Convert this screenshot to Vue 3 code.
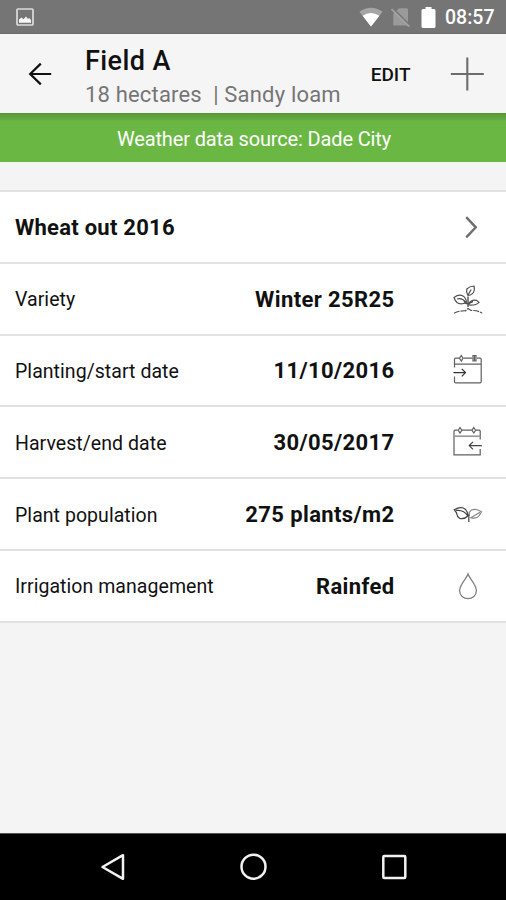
<script setup>
const rows = [
  { label: 'Variety', value: 'Winter 25R25', icon: 'variety' },
  { label: 'Planting/start date', value: '11/10/2016', icon: 'start' },
  { label: 'Harvest/end date', value: '30/05/2017', icon: 'end' },
  { label: 'Plant population', value: '275 plants/m2', icon: 'plant' },
  { label: 'Irrigation management', value: 'Rainfed', icon: 'drop' },
]
</script>

<template>
  <div class="screen">
    <div class="status">
      <svg class="picture" width="18" height="18" viewBox="0 0 18 18">
        <rect x="1" y="1" width="16" height="16" rx="1" fill="none" stroke="#dcdcdc" stroke-width="1.7" />
        <path d="M3 14.8V11.5L5.5 9.5L7.5 11.3L10 8.5L12 11L13.2 10L15 12V14.8Z" fill="#f6f6f6" />
      </svg>
      <svg class="wifi" width="24" height="20" viewBox="0 0 24 20">
        <path d="M12 19.5L.4 4.8Q12-3.2 23.6 4.8Z" fill="#a5a5a5" />
        <path d="M12 19.5L3.6 8.7Q12 3.2 20.4 8.7Z" fill="#fff" />
      </svg>
      <svg class="sim" width="20" height="20" viewBox="0 0 20 20">
        <path d="M8 1.2H15.5Q17 1.2 17 2.7V18.5H3.5Q2.3 18.5 2.3 17.3V6.7Z" fill="#9a9a9a" />
        <path d="M1.7 1.3L19.5 19.2" stroke="#777" stroke-width="2" />
        <path d="M.5 2L18.2 19.7" stroke="#a3a3a3" stroke-width="1.7" />
      </svg>
      <svg class="battery" width="15" height="21" viewBox="0 0 15 21">
        <path d="M4.5 0H10.5V2H13Q14.5 2 14.5 3.5V19.5Q14.5 21 13 21H2Q.5 21 .5 19.5V3.5Q.5 2 2 2H4.5Z" fill="#fff" />
      </svg>
      <span class="clock">08:57</span>
    </div>

    <header class="bar">
      <svg class="back" width="24" height="24" viewBox="0 0 24 24" fill="none" stroke="#111" stroke-width="2.2">
        <path d="M23.2 12H2.2M12.8 1.6L2.2 12L12.8 22.4" />
      </svg>
      <div class="heading">
        <div class="title">Field A</div>
        <div class="subtitle">18 hectares&nbsp; | Sandy loam</div>
      </div>
      <span class="edit">EDIT</span>
      <svg class="plus" width="34" height="34" viewBox="0 0 34 34" stroke="#6c6c6c" stroke-width="2.1">
        <path d="M.8 17H33.8M17.3 .5V33.5" />
      </svg>
    </header>

    <div class="source"><span>Weather data source: Dade City</span></div>

    <main class="list">
      <div class="row">
        <span class="crop">Wheat out 2016</span>
        <svg class="chevron" width="34" height="34" viewBox="0 0 34 34" fill="none" stroke="#6f6f6f" stroke-width="2.4">
          <path d="M15.2 6.2L24.8 16.3L15.2 26.4" />
        </svg>
      </div>
      <div v-for="row in rows" :key="row.label" class="row">
        <span class="label">{{ row.label }}</span>
        <span class="value">{{ row.value }}</span>
        <svg class="icon" width="34" height="34" viewBox="0 0 34 34" fill="none" stroke="#606060" stroke-width="1.2">
          <g v-if="row.icon === 'variety'" stroke="#505050">
            <path d="M17 24V13.5M17 21Q14.5 21 13 18.3M17 21.5Q18.5 19.5 22 18.5" stroke-width="1.4" />
            <path d="M3 14.5Q8 10.8 12 13Q15.3 15 15.5 19.8Q9 22 6 19.5Q4 17.5 3 14.5ZM6 16Q11 14.5 14.5 19" />
            <path d="M17 12.5Q14.8 9 15.8 6Q18.5 3.2 23 3Q24.3 8 21.5 10.6Q19.4 12.5 17 12.5ZM17 12L20.2 6.5" />
            <path d="M18 20.5Q20 16.5 25.5 17.3L28 19.3Q25 22.6 18 22Z" />
            <path d="M3 30.3Q8 27.5 14.5 27.8L17 25.5L20 27.5Q27 27.2 31 30.3" stroke-dasharray="6 1" />
          </g>
          <g v-else-if="row.icon === 'start'">
            <path d="M3.5 13.5V5.2Q3.5 4.2 4.5 4.2H8M12.5 4.2H21.5M26 4.2H29.2Q30.2 4.2 30.2 5.2V27.5Q30.2 28.8 29 28.8H4.8Q3.5 28.8 3.5 27.5V22.5M3.5 10.2H30.2" />
            <path d="M8.5 4.2L10.3 1.5L12 4.2L10.3 7ZM22 1.5H25V7H22ZM23.5 1.5V7" />
            <path d="M2.5 18.6H14.2M10.8 14.8L14.5 18.6L10.8 22.4" stroke="#333" />
          </g>
          <g v-else-if="row.icon === 'end'">
            <path d="M29.2 13.5V5.2Q29.2 4.2 28.2 4.2H25M20.8 4.2H11M6.8 4.2H4Q3 4.2 3 5.2V28.8H29.2V23" />
            <path d="M3 10.2H29.2" stroke="#999" stroke-width="1.7" />
            <path d="M7.3 4.2L9 1.5L10.8 4.2L9 7ZM21 4.2L22.8 1.5L24.6 4.2L22.8 7Z" />
            <path d="M30.8 19.6H18.5M22 15.8L18.2 19.6L22 23.4" stroke="#444" />
          </g>
          <g v-else-if="row.icon === 'plant'">
            <path d="M3.2 11.7Q10 8 14.3 11.2Q17 14 16.8 18Q13.5 21.5 8.7 20.3Q6 18.6 5.5 14.8ZM5 12.4Q13 11.5 16.8 18" stroke="#444" />
            <path d="M18.3 18Q17.3 14 20.5 12Q25 10 30.5 13.8L28.3 17.5Q25.5 21.3 19.8 19.7L29 14.2" stroke="#888" />
            <path d="M17.8 16V24" stroke="#444" />
          </g>
          <path v-else d="M17 4C15.5 8.6 8.6 14.6 8.6 20.4C8.6 25.4 12.5 28.7 17 28.7C21.5 28.7 25.4 25.4 25.4 20.4C25.4 14.6 18.5 8.6 17 4Z" stroke="#808080" stroke-width="1.3" />
        </svg>
      </div>
    </main>

    <nav class="nav">
      <svg width="28" height="28" viewBox="0 0 28 28"><path d="M3.5 14L24 2.2V25.8Z" /></svg>
      <svg width="28" height="28" viewBox="0 0 28 28"><circle cx="13.5" cy="13.7" r="12" /></svg>
      <svg width="28" height="28" viewBox="0 0 28 28"><rect x="3.3" y="3" width="22" height="22" rx="1" /></svg>
    </nav>
  </div>
</template>

<style>
body {
  margin: 0;
  background: #f4f4f4;
}
</style>

<style scoped>
.screen {
  width: 506px;
  height: 900px;
  display: flex;
  flex-direction: column;
  overflow: hidden;
  background: #f4f4f4;
  color: #111;
  font-family: Roboto, "Liberation Sans", sans-serif;
  white-space: nowrap;
}
svg {
  display: block;
  flex: none;
}
.status {
  flex: none;
  height: 34px;
  box-sizing: border-box;
  display: flex;
  align-items: center;
  padding: 1px 11px 0 16px;
  background: #757575;
  border-bottom: 1px solid #6b6b6b;
}
.wifi {
  margin-left: auto;
}
.sim {
  margin-left: 8px;
}
.battery {
  margin-left: 10px;
}
.clock {
  width: 50px;
  margin-left: 9px;
  color: #fff;
  font-size: 19.5px;
  font-weight: 500;
  line-height: 24px;
  padding-top: 2px;
}
.bar {
  flex: none;
  height: 79px;
  box-sizing: border-box;
  display: flex;
  align-items: center;
  padding: 0 22px 0 28px;
  background: #f5f5f5;
}
.heading {
  margin-left: 33px;
  align-self: flex-start;
  padding-top: 10px;
}
.title {
  font-size: 27px;
  font-weight: 500;
  line-height: 34px;
  letter-spacing: 0.4px;
}
.subtitle {
  color: #757575;
  font-size: 22px;
  line-height: 34px;
  letter-spacing: 0.18px;
}
.edit {
  margin-left: auto;
  margin-right: 39.5px;
  padding-top: 2px;
  font-size: 19px;
  font-weight: 500;
  line-height: 24px;
}
.source {
  flex: none;
  height: 49px;
  box-sizing: border-box;
  display: flex;
  align-items: center;
  justify-content: center;
  padding: 3px 0 0 2px;
  background: linear-gradient(#4f982f 0, #5e9e3c 2px, #65a740 6px, #6bb744 8px);
  color: #fff;
  font-size: 20px;
  letter-spacing: -0.14px;
}
.list {
  flex: none;
  margin-top: 28px;
  border-top: 2px solid #e2e2e2;
  background: #fff;
}
.row {
  height: 71.8px;
  box-sizing: border-box;
  display: flex;
  align-items: center;
  padding: 2px 21px 0 15px;
  border-bottom: 2px solid #e2e2e2;
}
.crop,
.value {
  font-size: 22px;
  font-weight: 700;
  line-height: 28px;
  letter-spacing: 0.38px;
}
.crop {
  letter-spacing: 0.25px;
}
.label {
  padding-top: 1px;
  font-size: 19.5px;
  line-height: 28px;
  letter-spacing: 0.05px;
}
.value {
  margin-left: auto;
}
.icon {
  margin-left: 56.5px;
}
.chevron {
  margin-left: auto;
}
.nav {
  flex: none;
  height: 67px;
  box-sizing: border-box;
  margin-top: auto;
  display: flex;
  align-items: center;
  justify-content: center;
  gap: 112.5px;
  padding-left: 1px;
  background: #000;
  border-top: 1px solid #555;
}
.nav svg {
  fill: none;
  stroke: #f2f2f2;
  stroke-width: 2.5;
  stroke-linejoin: round;
}
</style>
